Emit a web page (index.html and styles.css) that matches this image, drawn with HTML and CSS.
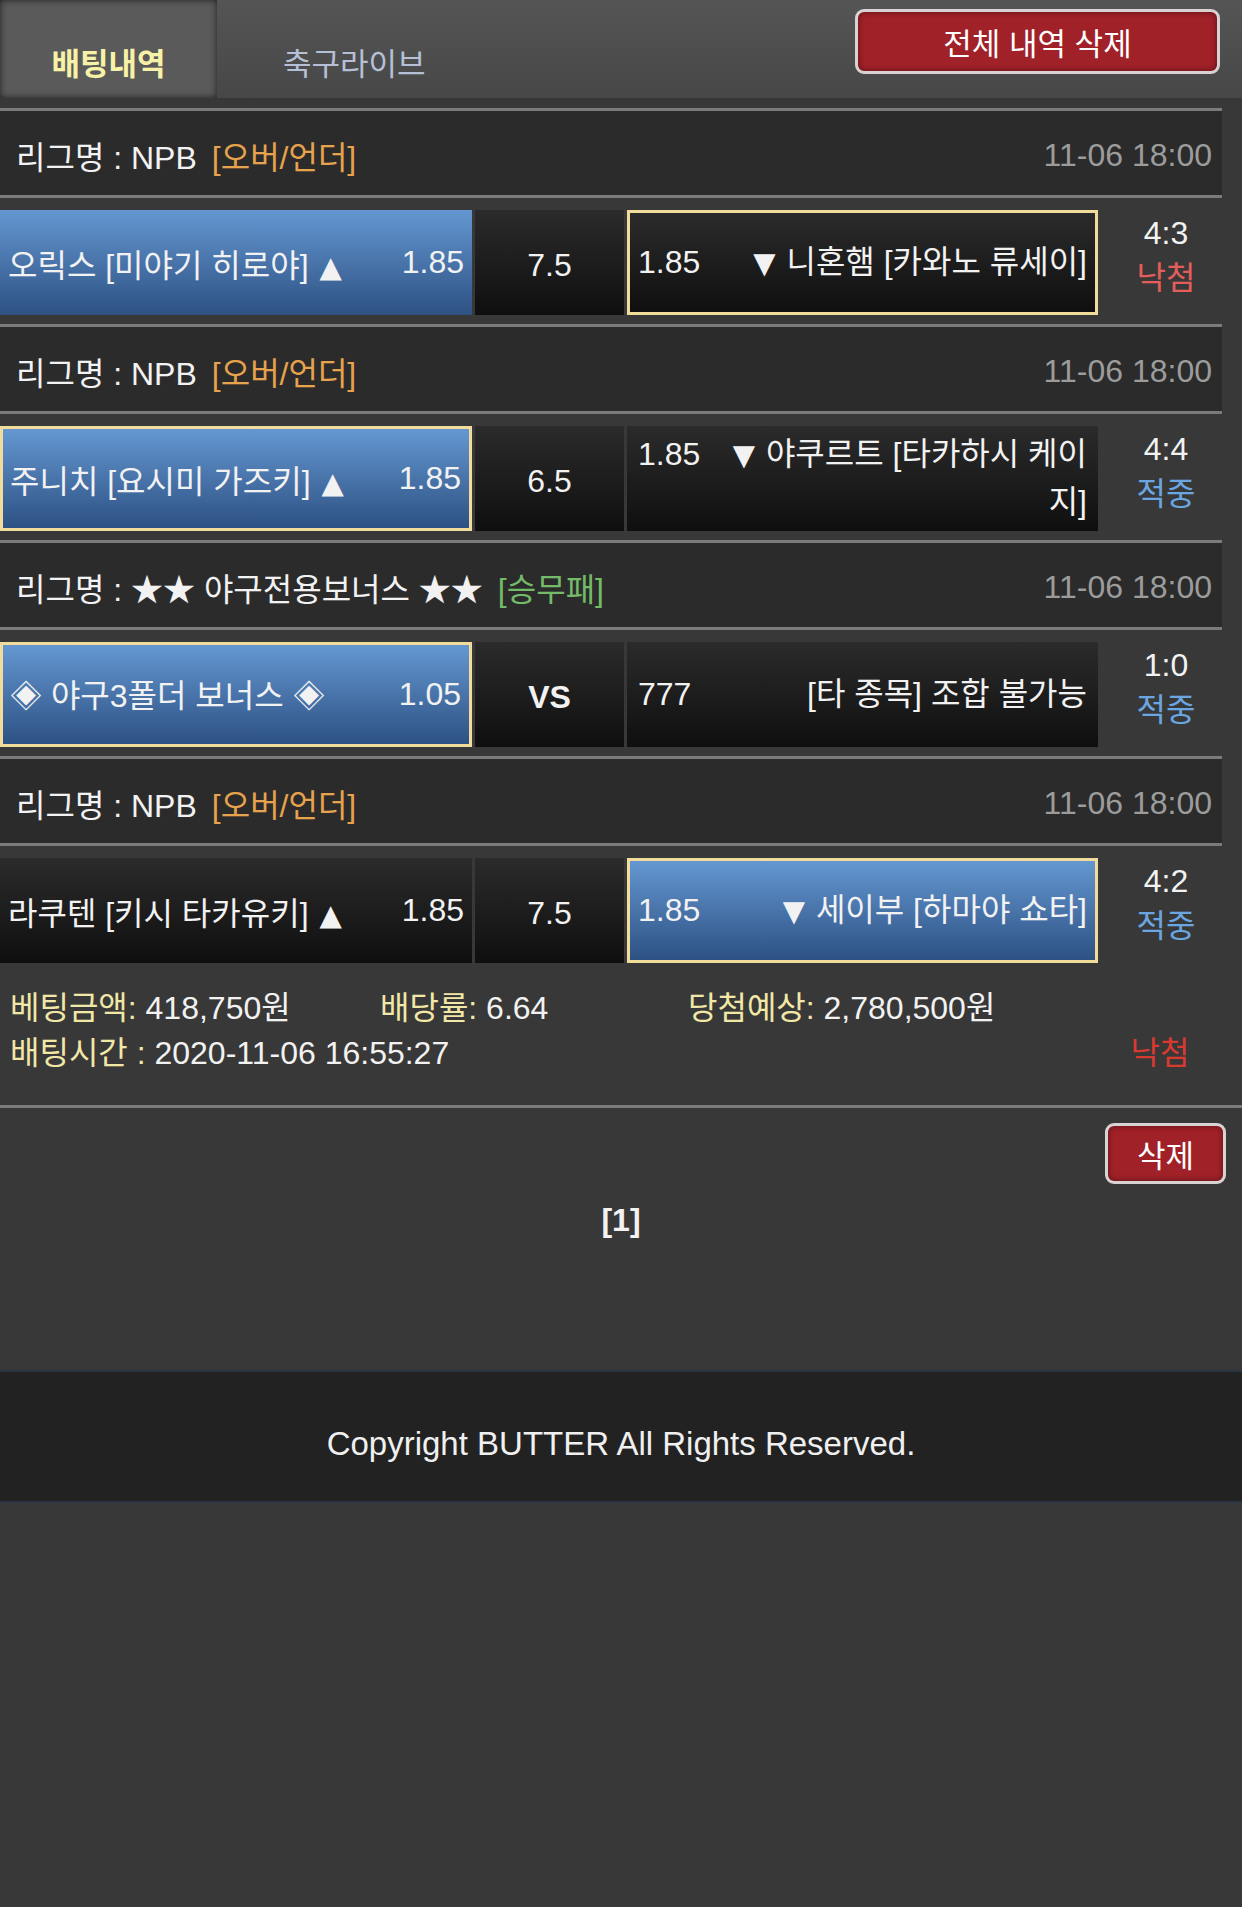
FILE: index.html
```html
<!DOCTYPE html>
<html lang="ko">
<head>
<meta charset="utf-8">
<title>배팅내역</title>
<link rel="stylesheet" href="styles.css">
</head>
<body>
<header class="top">
  <nav class="tabs">
    <a class="tab active">배팅내역</a>
    <a class="tab">축구라이브</a>
  </nav>
  <button class="btn-red btn-all">전체 내역 삭제</button>
</header>

<main>
  <div class="slip-wrap">
    <section class="slip">
      <div class="game">
        <div class="league"><span class="league-name">리그명 : NPB</span><span class="type ou">[오버/언더]</span><span class="time">11-06 18:00</span></div>
        <div class="match">
          <div class="pick home win"><span class="name">오릭스 [미야기 히로야] <span class="arrow">▲</span></span><span class="odds">1.85</span></div>
          <div class="line">7.5</div>
          <div class="pick away chosen"><div class="pick-body"><span class="odds">1.85</span><span class="name"><span class="arrow">▼</span> 니혼햄 [카와노 류세이]</span></div></div>
          <div class="result"><span>4:3</span><span class="lose">낙첨</span></div>
        </div>
      </div>

      <div class="game">
        <div class="league"><span class="league-name">리그명 : NPB</span><span class="type ou">[오버/언더]</span><span class="time">11-06 18:00</span></div>
        <div class="match">
          <div class="pick home win chosen"><span class="name">주니치 [요시미 가즈키] <span class="arrow">▲</span></span><span class="odds">1.85</span></div>
          <div class="line">6.5</div>
          <div class="pick away"><div class="pick-body"><span class="odds">1.85</span><span class="name"><span class="arrow">▼</span> 야쿠르트 [타카하시 케이지]</span></div></div>
          <div class="result"><span>4:4</span><span class="hit">적중</span></div>
        </div>
      </div>

      <div class="game">
        <div class="league"><span class="league-name">리그명 : ★★ 야구전용보너스 ★★</span><span class="type wdl">[승무패]</span><span class="time">11-06 18:00</span></div>
        <div class="match">
          <div class="pick home win chosen"><span class="name">◈ 야구3폴더 보너스 ◈</span><span class="odds">1.05</span></div>
          <div class="line vs">VS</div>
          <div class="pick away"><div class="pick-body"><span class="odds">777</span><span class="name">[타 종목] 조합 불가능</span></div></div>
          <div class="result"><span>1:0</span><span class="hit">적중</span></div>
        </div>
      </div>

      <div class="game">
        <div class="league"><span class="league-name">리그명 : NPB</span><span class="type ou">[오버/언더]</span><span class="time">11-06 18:00</span></div>
        <div class="match">
          <div class="pick home"><span class="name">라쿠텐 [키시 타카유키] <span class="arrow">▲</span></span><span class="odds">1.85</span></div>
          <div class="line">7.5</div>
          <div class="pick away win chosen"><div class="pick-body"><span class="odds">1.85</span><span class="name"><span class="arrow">▼</span> 세이부 [하마야 쇼타]</span></div></div>
          <div class="result"><span>4:2</span><span class="hit">적중</span></div>
        </div>
      </div>

      <div class="summary">
        <div class="summary-info">
          <div class="summary-line">
            <span class="item amount"><span class="label">베팅금액:</span> 418,750원</span>
            <span class="item rate"><span class="label">배당률:</span> 6.64</span>
            <span class="item expect"><span class="label">당첨예상:</span> 2,780,500원</span>
          </div>
          <div class="summary-line"><span class="label">배팅시간 :</span> 2020-11-06 16:55:27</div>
        </div>
        <div class="summary-status">낙첨</div>
      </div>
    </section>
  </div>

  <div class="actions"><button class="btn-red btn-del">삭제</button></div>
  <div class="pager">[1]</div>
</main>

<footer class="foot">Copyright BUTTER All Rights Reserved.</footer>
</body>
</html>
```

FILE: styles.css
```css
* { box-sizing: border-box; }

html, body {
  margin: 0;
  padding: 0;
  background: #383838;
}

body {
  width: 1242px;
  min-height: 1907px;
  font-family: "Liberation Sans", "Noto Sans CJK KR", sans-serif;
  font-size: 32px;
  color: #f2f2f2;
}

/* header */
.top {
  height: 98px;
  display: flex;
  align-items: flex-start;
  background: linear-gradient(#555555, #474747);
  margin-bottom: 10px;
}

.tabs {
  display: flex;
  height: 98px;
}

.tab {
  height: 98px;
  display: flex;
  align-items: center;
  padding-top: 24px;
  font-size: 31px;
}

.tab.active {
  width: 217px;
  justify-content: center;
  background: #5a5a5a;
  box-shadow: inset 0 0 7px rgba(0, 0, 0, 0.65);
  color: #f7f2a6;
  font-weight: bold;
}

.tab:not(.active) {
  margin-left: 66px;
  color: #b5c0d6;
}

.btn-red {
  font-family: "Liberation Sans", "Noto Sans CJK KR", sans-serif;
  background: #a12128;
  color: #ffffff;
  border: 3px solid #d9d2d2;
  border-radius: 9px;
  box-shadow: inset 0 0 6px rgba(0, 0, 0, 0.45);
  padding: 0;
  cursor: pointer;
}

.btn-all {
  margin-left: auto;
  margin-right: 22px;
  margin-top: 9px;
  width: 365px;
  height: 65px;
  font-size: 31px;
}

/* slip */
.slip-wrap {
  border-bottom: 3px solid #7b7b7b;
}

.slip {
  width: 1222px;
}

.game {
  border-top: 3px solid #7b7b7b;
  padding-bottom: 9px;
}

.league {
  height: 87px;
  display: flex;
  align-items: center;
  padding: 4px 10px 0 16px;
  background: #2b2b2b;
  border-bottom: 3px solid #7b7b7b;
}

.type {
  margin-left: 15px;
}

.type.ou { color: #e6a24c; }
.type.wdl { color: #73bb68; }

.time {
  margin-left: auto;
  color: #9c9c9c;
}

.match {
  display: flex;
  height: 105px;
  margin-top: 12px;
}

.pick {
  height: 105px;
  background: linear-gradient(#2b2b2b, #0f0f0f);
}

.pick.win {
  background: linear-gradient(#6497d1, #2d5183);
}

.pick.chosen {
  border: 3px solid #f1dc9c;
}

.arrow {
  font-family: "DejaVu Sans", sans-serif;
  font-size: 29px;
  margin-left: 2px;
}

.pick-body .arrow {
  margin-left: 0;
  margin-right: 2px;
}

.home {
  width: 472px;
  display: flex;
  align-items: center;
  justify-content: space-between;
  padding: 0 8px 0 8px;
  white-space: nowrap;
}

.home.chosen {
  padding: 0 8px 0 7px;
}

.line {
  width: 149px;
  margin: 0 3px;
  display: flex;
  align-items: center;
  justify-content: center;
  padding-top: 6px;
  background: linear-gradient(#2b2b2b, #0f0f0f);
}

.line.vs {
  font-weight: bold;
}

.away {
  width: 471px;
  display: flex;
  align-items: center;
  padding: 0 11px 0 11px;
}

.away.chosen {
  padding: 0 8px 0 8px;
}

.pick-body {
  width: 100%;
  line-height: 47px;
  text-align: right;
}

.pick-body .odds {
  float: left;
  margin-right: 10px;
}

.result {
  width: 124px;
  display: flex;
  flex-direction: column;
  align-items: center;
  justify-content: center;
  line-height: 45px;
  padding: 0 0 14px 12px;
}

.lose { color: #e35e5b; }
.hit { color: #6aa6e0; }

/* summary */
.summary {
  display: flex;
  padding: 14px 0 29px 0;
  line-height: 45px;
}

.summary-info {
  width: 1098px;
  padding-left: 10px;
}

.summary-line {
  display: flex;
  white-space: pre;
}

.label { color: #f1e7a6; }

.item.amount { width: 370px; }
.item.rate { width: 308px; }

.summary-status {
  width: 124px;
  align-self: flex-end;
  text-align: center;
  color: #d93a30;
}

/* actions */
.actions {
  display: flex;
  justify-content: flex-end;
  padding: 15px 16px 0 0;
}

.btn-del {
  width: 121px;
  height: 61px;
  font-size: 31px;
}

.pager {
  text-align: center;
  font-weight: bold;
  line-height: 40px;
  margin-top: 16px;
  height: 170px;
}

.foot {
  height: 133px;
  background: #222222;
  border-top: 2px solid #2b3541;
  border-bottom: 2px solid #2b3541;
  display: flex;
  align-items: center;
  justify-content: center;
  padding-top: 14px;
  font-size: 33px;
  color: #f0f0f0;
}
```
